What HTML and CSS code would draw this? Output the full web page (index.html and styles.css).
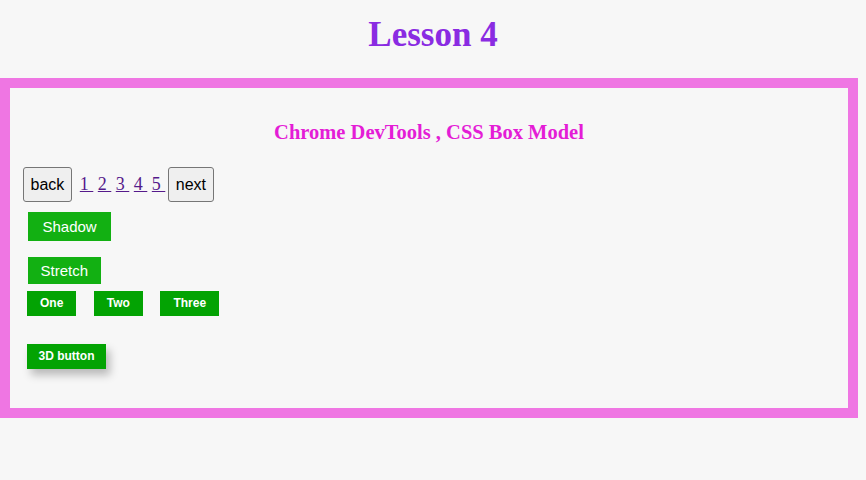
FILE: index.html
```html
<!DOCTYPE html>
<html lang="en">
<head>
<meta charset="utf-8">
<title>Lesson 4</title>
<link rel="stylesheet" href="styles.css">
</head>
<body>
<h1 class="title">Lesson 4</h1>
<div class="box">
  <h2 class="subtitle">Chrome DevTools , CSS Box Model</h2>
  <div class="pager">
    <button class="nav-btn">back</button>
    <span class="pages"><a href="#">1 </a> <a href="#">2 </a> <a href="#">3 </a> <a href="#">4 </a> <a href="#">5 </a></span>
    <button class="nav-btn next">next</button>
  </div>
  <div class="row"><button class="green shadow-btn">Shadow</button></div>
  <div class="row"><button class="green stretch-btn">Stretch</button></div>
  <div class="group">
    <button class="small">One</button>
    <button class="small">Two</button>
    <button class="small">Three</button>
  </div>
  <div class="row3d"><button class="small btn3d">3D button</button></div>
</div>
</body>
</html>
```
FILE: styles.css
```css
html, body {
  margin: 0;
  padding: 0;
  background: #f7f7f7;
}
body {
  font-family: "Liberation Serif", "Times New Roman", serif;
}
.title {
  margin: 0;
  padding-top: 15px;
  height: 78px;
  box-sizing: border-box;
  text-align: center;
  font-size: 35px;
  line-height: 40px;
  font-weight: bold;
  color: #8a2be2;
}
.box {
  width: calc(100% - 8px);
  box-sizing: border-box;
  border: 10px solid #ef76e3;
  padding: 33px 0 39px 0;
  display: flex;
  flex-direction: column;
  align-items: flex-start;
}
.subtitle {
  align-self: stretch;
  margin: 0 0 24px 0;
  text-align: center;
  font-size: 20.5px;
  line-height: 22px;
  color: #e41dd6;
}
.pager {
  display: flex;
  align-items: baseline;
  padding-left: 13px;
}
.nav-btn {
  font-family: "Liberation Sans", Arial, sans-serif;
  font-size: 16px;
  line-height: 17px;
  padding: 8px 6.5px;
  margin: 0;
  border: 1px solid #767676;
  border-radius: 3px;
  background: #efefef;
  color: #000;
}
.pages {
  margin-left: 8px;
  font-size: 18px;
  white-space: pre;
}
.pages a {
  color: #551a8b;
}
.next {
  margin-left: 3px;
}
.row {
  padding-left: 18px;
}
.pager + .row {
  margin-top: 10px;
}
.row + .row {
  margin-top: 16px;
}
.green {
  font-family: "Liberation Sans", Arial, sans-serif;
  font-size: 15px;
  line-height: 17px;
  background: #12b012;
  color: #fff;
  border: none;
  margin: 0;
}
.shadow-btn {
  padding: 6px 14.5px;
}
.stretch-btn {
  padding: 5px 12.5px;
}
.group {
  display: flex;
  gap: 17.5px;
  margin-top: 7px;
  padding-left: 17px;
}
.small {
  font-family: "Liberation Sans", Arial, sans-serif;
  font-size: 12px;
  font-weight: bold;
  line-height: 15px;
  padding: 5px 13px;
  margin: 0;
  border: none;
  background: #03a303;
  color: #fff;
}
.row3d {
  margin-top: 28px;
  padding-left: 17px;
}
.btn3d {
  padding: 5px 11.5px;
  box-shadow: 4px 6px 9px rgba(0, 0, 0, 0.25);
}
```
